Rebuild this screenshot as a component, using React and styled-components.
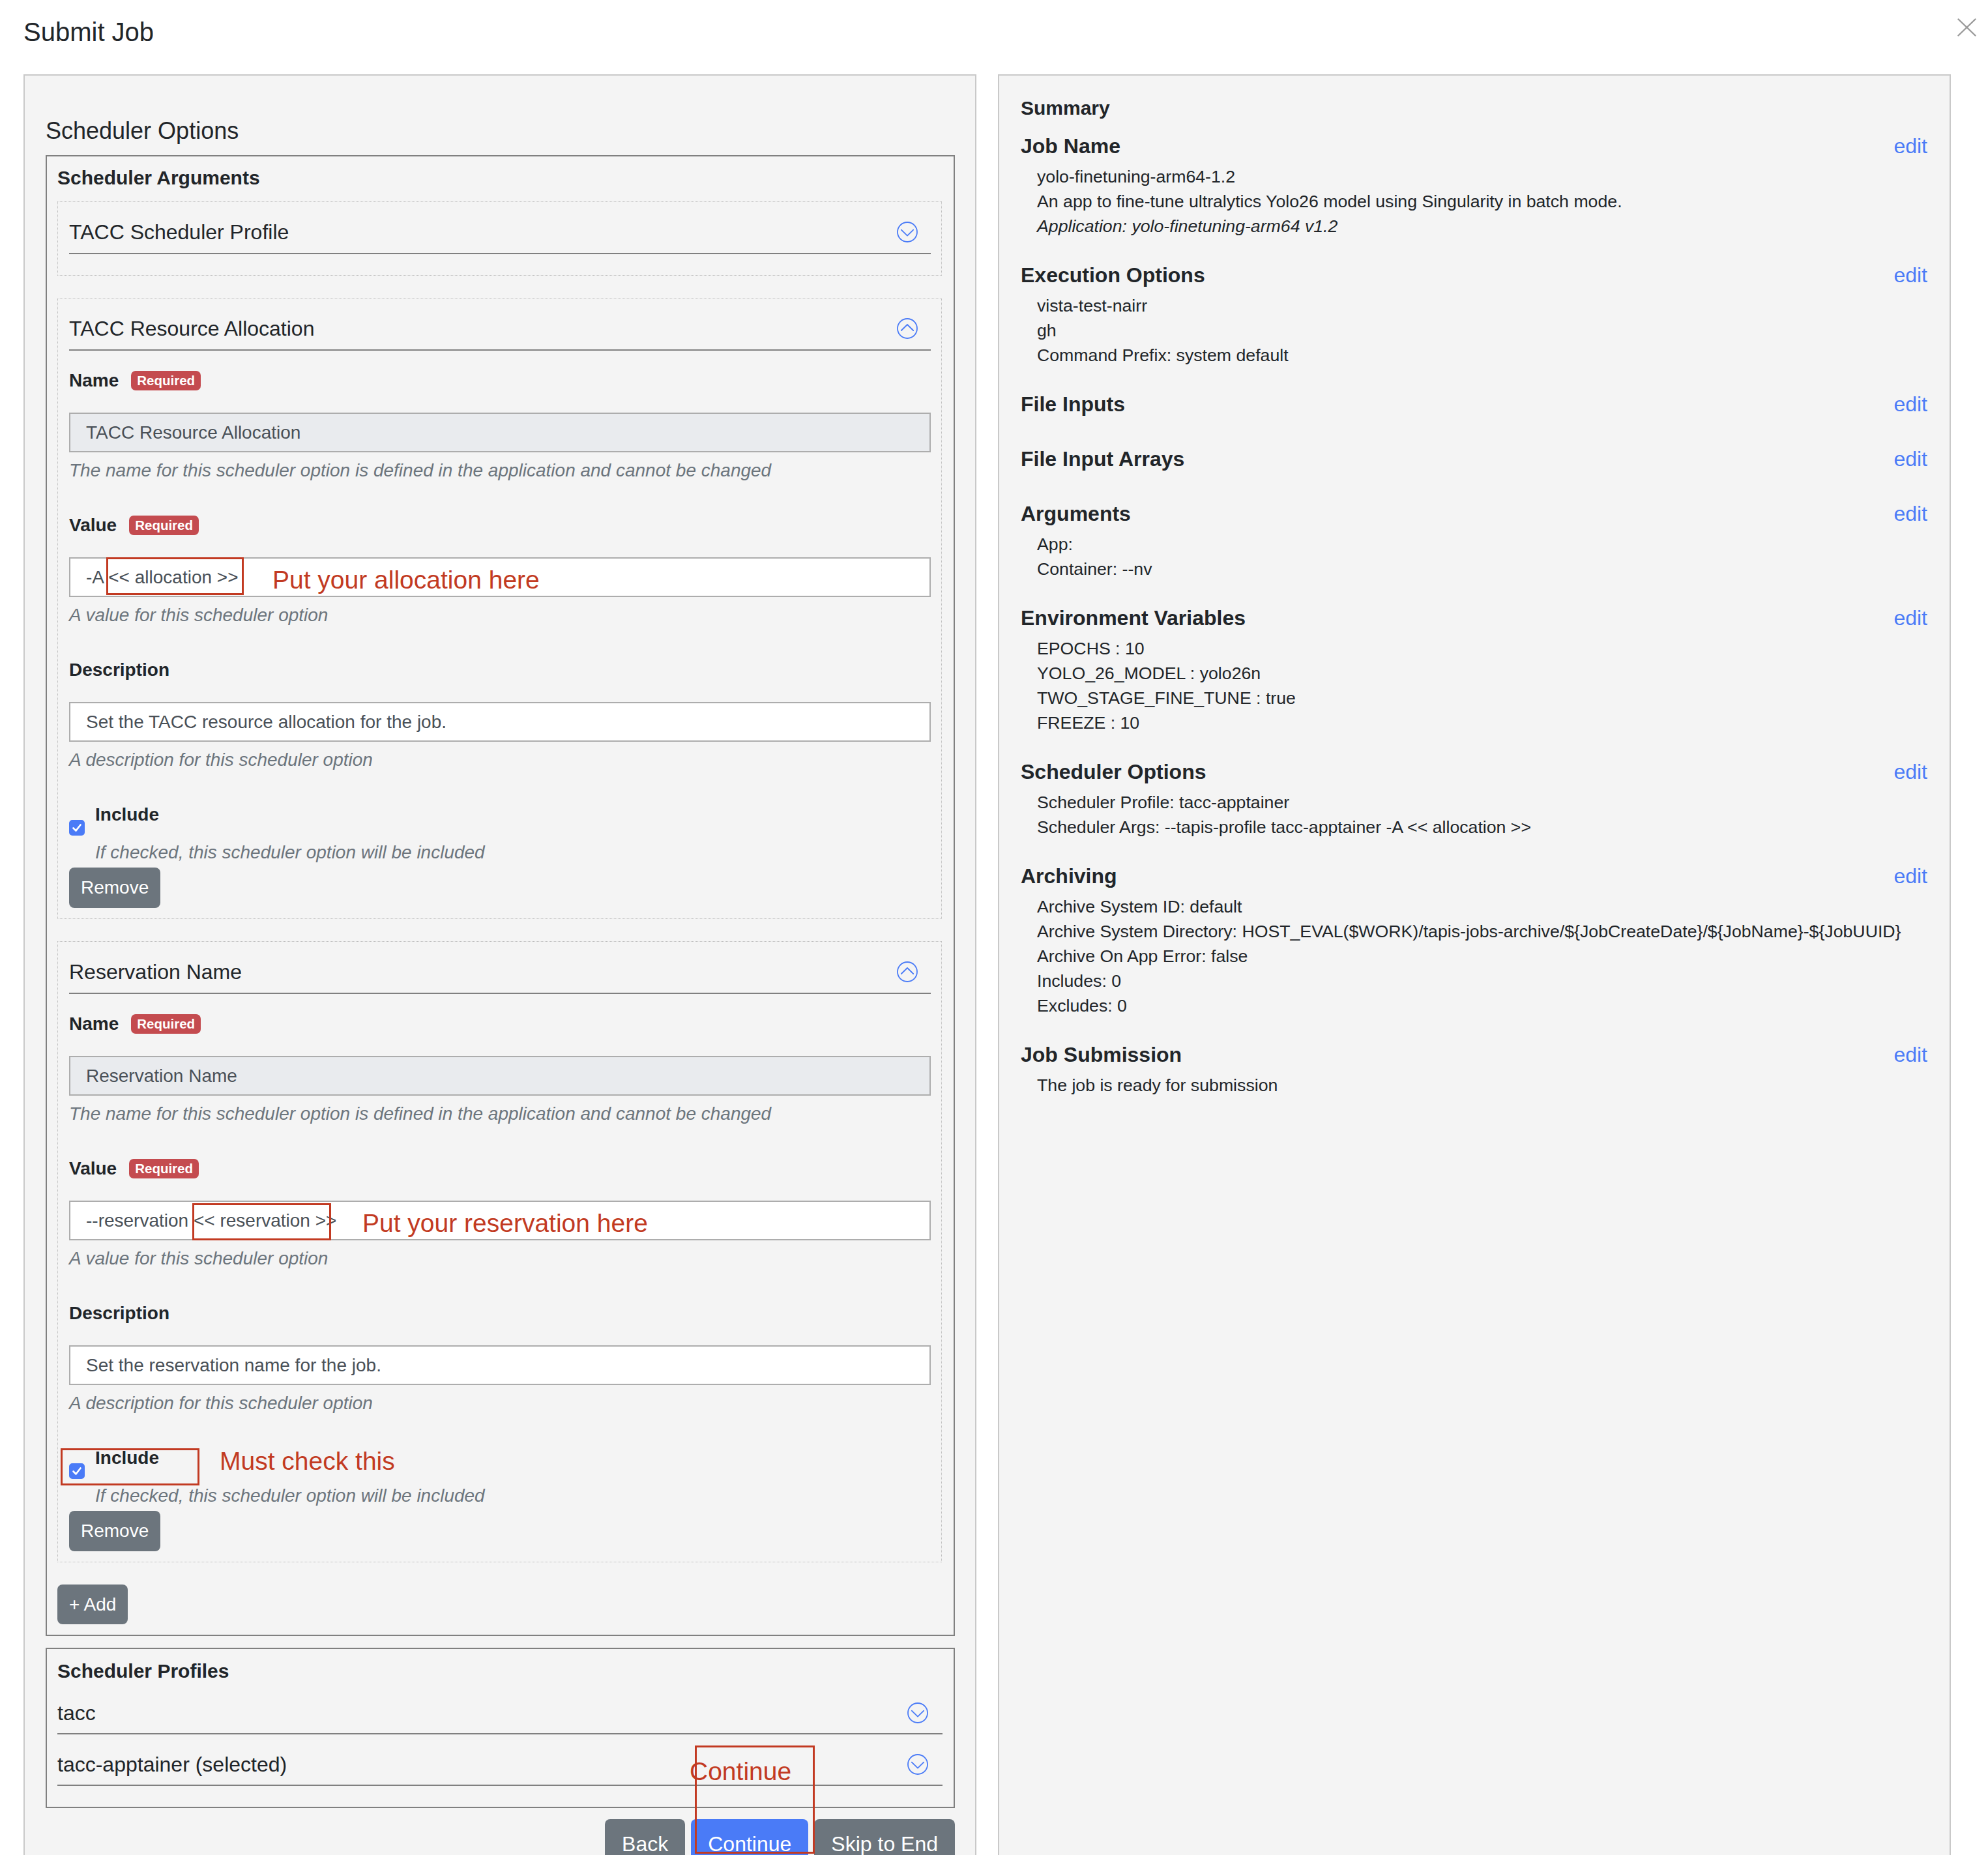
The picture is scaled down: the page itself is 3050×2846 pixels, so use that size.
import styled, { createGlobalStyle } from "styled-components";

const GlobalStyle = createGlobalStyle`
  html, body {
    margin: 0;
    padding: 0;
    background: #fff;
    overflow: hidden;
  }
  body {
    font-family: "Liberation Sans", Arial, Helvetica, sans-serif;
    color: #212529;
  }
  * {
    box-sizing: border-box;
  }
`;

const Page = styled.div`
  width: 3050px;
  padding: 25px 18px 0 36px;
`;

const Header = styled.div`
  display: flex;
  justify-content: space-between;
  align-items: flex-start;
  margin-bottom: 41px;
`;

const Title = styled.h1`
  margin: 0;
  font-size: 40px;
  line-height: 48px;
  font-weight: 400;
`;

const CloseButton = styled.button`
  border: 0;
  background: none;
  padding: 0;
  margin-top: 3px;
  width: 29px;
  height: 28px;
  display: flex;
  cursor: pointer;
`;

const Columns = styled.div`
  display: grid;
  grid-template-columns: 1462px 1462px;
  column-gap: 33px;
  align-items: stretch;
`;

const Panel = styled.section`
  background: #f4f4f4;
  border: 2px solid #c9c9c9;
  padding: ${(p) => p.$pad};
`;

/* ---------- left: scheduler options ---------- */

const SectionTitle = styled.h2`
  margin: 0 0 16px;
  font-size: 36px;
  line-height: 43px;
  font-weight: 400;
`;

const Group = styled.div`
  border: 2px solid #808080;
  padding: ${(p) => p.$pt}px 17px 16px 16px;
  margin-top: ${(p) => p.$mt || 0}px;
`;

const GroupTitle = styled.div`
  font-size: 30px;
  line-height: 36px;
  font-weight: 700;
  margin-bottom: 18px;
`;

const Item = styled.div`
  border: 1px dotted #bdbdbd;
  padding: 26px 16px 16px 17px;
  margin: 0 1px 34px 0;
`;

const ItemHeader = styled.div`
  display: flex;
  justify-content: space-between;
  align-items: center;
  padding: 0 20px 12px 0;
  border-bottom: 2px solid #808080;
  margin-bottom: 16px;
`;

const ItemTitle = styled.div`
  font-size: 32px;
  line-height: 40px;
`;

const ItemBody = styled.div`
  padding-top: 9px;
`;

const Field = styled.div`
  & + & {
    margin-top: 42px;
  }
`;

const LabelRow = styled.div`
  display: flex;
  align-items: center;
  gap: 19px;
  height: 42px;
  margin-bottom: 28px;
`;

const Label = styled.div`
  font-size: 28px;
  line-height: 42px;
  font-weight: 700;
`;

const Badge = styled.span`
  display: inline-block;
  background: #c44b4f;
  color: #fff;
  font-size: 20.5px;
  font-weight: 700;
  line-height: 30px;
  padding: 0 9px;
  border-radius: 7px;
`;

const InputWrap = styled.div`
  position: relative;
`;

const TextInput = styled.input`
  display: block;
  width: 100%;
  height: 61px;
  padding: 0 24px;
  border: 2px solid #adadad;
  border-radius: 0;
  background: ${(p) => (p.$locked ? "#e9ebee" : "#fff")};
  color: #495057;
  font-family: "Liberation Sans", Arial, sans-serif;
  font-size: 28px;
  outline: none;
`;

const Help = styled.div`
  margin-top: ${(p) => p.$mt ?? 7}px;
  font-size: 28px;
  line-height: 42px;
  font-style: italic;
  color: #6c757d;
`;

const CheckRow = styled.div`
  position: relative;
  display: flex;
  align-items: flex-start;
  gap: 16px;
  margin-top: 42px;
`;

const CheckBox = styled.span`
  flex: none;
  width: 24px;
  height: 24px;
  margin-top: 29px;
  border-radius: 5px;
  background: #4a7bf7;
  display: flex;
  align-items: center;
  justify-content: center;
`;

const CheckText = styled.div`
  display: flex;
  flex-direction: column;
`;

const SmallButton = styled.button`
  display: block;
  margin-top: ${(p) => p.$mt || 0}px;
  background: #6c757d;
  border: 0;
  border-radius: 8px;
  color: #fff;
  font-family: "Liberation Sans", Arial, sans-serif;
  font-size: 28px;
  line-height: 42px;
  padding: ${(p) => (p.$tall ? "10px" : "9.5px")} 18px;
  cursor: pointer;
`;

const ProfileRow = styled.div`
  display: flex;
  justify-content: space-between;
  align-items: center;
  margin-top: 26px;
  padding: 0 22px 11px 0;
  border-bottom: 2px solid #808080;
  font-size: 32px;
  line-height: 40px;

  &:last-child {
    margin-bottom: 16px;
  }
`;

const ButtonRow = styled.div`
  position: relative;
  display: flex;
  justify-content: flex-end;
  gap: 9px;
  margin-top: 17px;
`;

const Button = styled.button`
  background: ${(p) => (p.$primary ? "#4a7bf7" : "#6c757d")};
  border: 2px solid ${(p) => (p.$primary ? "#4a7bf7" : "#6c757d")};
  border-radius: 8px;
  color: #fff;
  font-family: "Liberation Sans", Arial, sans-serif;
  font-size: 32px;
  line-height: 48px;
  padding: 12px 24px;
  cursor: pointer;
`;

/* red annotations drawn over the screenshot */
const NoteBox = styled.div`
  position: absolute;
  left: ${(p) => p.$x}px;
  top: ${(p) => p.$y}px;
  width: ${(p) => p.$w}px;
  height: ${(p) => p.$h}px;
  border: 3px solid #c23a22;
  pointer-events: none;
`;

const NoteText = styled.div`
  position: absolute;
  left: ${(p) => p.$x}px;
  top: ${(p) => p.$y}px;
  font-size: 39px;
  line-height: 48px;
  color: #c23a22;
  white-space: nowrap;
  pointer-events: none;
`;

/* ---------- right: summary ---------- */

const SummaryTitle = styled.div`
  font-size: 30px;
  line-height: 38px;
  font-weight: 700;
  margin-bottom: 20px;
`;

const SummarySection = styled.div`
  margin-bottom: 37px;
`;

const SummaryHead = styled.div`
  display: flex;
  justify-content: space-between;
  align-items: center;
  padding-bottom: 9px;
`;

const SummaryHeading = styled.div`
  font-size: 32px;
  line-height: 38px;
  font-weight: 700;
`;

const EditLink = styled.a`
  font-size: 32px;
  line-height: 38px;
  color: #4a7bf7;
  text-decoration: none;
  cursor: pointer;
`;

const SummaryLine = styled.div`
  padding-left: 25px;
  font-size: 26.7px;
  line-height: 38px;
  font-style: ${(p) => (p.$italic ? "italic" : "normal")};
  white-space: nowrap;
`;

/* ---------- icons ---------- */

const ChevronCircle = ({ up }) => (
  <svg
    width="32"
    height="32"
    viewBox="0 0 32 32"
    fill="none"
    stroke="#4a7bf7"
    strokeWidth="1.8"
    strokeLinecap="round"
    strokeLinejoin="round"
  >
    <circle cx="16" cy="16" r="15" />
    <path d={up ? "M6.8 19 L16 10 L25.2 19" : "M6.8 12.6 L16 21.6 L25.2 12.6"} />
  </svg>
);

const CloseIcon = () => (
  <svg width="29" height="28" viewBox="0 0 29 28" stroke="#9a9a9a" strokeWidth="2.4" strokeLinecap="round">
    <line x1="1.5" y1="1.5" x2="27.5" y2="26.5" />
    <line x1="27.5" y1="1.5" x2="1.5" y2="26.5" />
  </svg>
);

const CheckMark = () => (
  <svg width="24" height="24" viewBox="0 0 24 24" fill="none" stroke="#fff" strokeWidth="2.6" strokeLinecap="round" strokeLinejoin="round">
    <path d="M6.5 12.5 L10.5 16.5 L17.5 7.5" />
  </svg>
);

/* ---------- data ---------- */

const summary = [
  {
    title: "Job Name",
    lines: [
      "yolo-finetuning-arm64-1.2",
      "An app to fine-tune ultralytics Yolo26 model using Singularity in batch mode.",
      { italic: true, text: "Application: yolo-finetuning-arm64 v1.2" },
    ],
  },
  { title: "Execution Options", lines: ["vista-test-nairr", "gh", "Command Prefix: system default"] },
  { title: "File Inputs", lines: [] },
  { title: "File Input Arrays", lines: [] },
  { title: "Arguments", lines: ["App:", "Container: --nv"] },
  {
    title: "Environment Variables",
    lines: ["EPOCHS : 10", "YOLO_26_MODEL : yolo26n", "TWO_STAGE_FINE_TUNE : true", "FREEZE : 10"],
  },
  {
    title: "Scheduler Options",
    lines: [
      "Scheduler Profile: tacc-apptainer",
      "Scheduler Args: --tapis-profile tacc-apptainer -A << allocation >>",
    ],
  },
  {
    title: "Archiving",
    lines: [
      "Archive System ID: default",
      "Archive System Directory: HOST_EVAL($WORK)/tapis-jobs-archive/${JobCreateDate}/${JobName}-${JobUUID}",
      "Archive On App Error: false",
      "Includes: 0",
      "Excludes: 0",
    ],
  },
  { title: "Job Submission", lines: ["The job is ready for submission"] },
];

const SchedulerItem = ({ title, value, description, valueNote, includeNote }) => (
  <Item>
    <ItemHeader>
      <ItemTitle>{title}</ItemTitle>
      <ChevronCircle up />
    </ItemHeader>
    <ItemBody>
      <Field>
        <LabelRow>
          <Label>Name</Label>
          <Badge>Required</Badge>
        </LabelRow>
        <TextInput readOnly $locked value={title} />
        <Help>The name for this scheduler option is defined in the application and cannot be changed</Help>
      </Field>
      <Field>
        <LabelRow>
          <Label>Value</Label>
          <Badge>Required</Badge>
        </LabelRow>
        <InputWrap>
          <TextInput readOnly value={value} />
          {valueNote}
        </InputWrap>
        <Help>A value for this scheduler option</Help>
      </Field>
      <Field>
        <LabelRow>
          <Label>Description</Label>
        </LabelRow>
        <TextInput readOnly value={description} />
        <Help>A description for this scheduler option</Help>
      </Field>
      <CheckRow>
        <CheckBox>
          <CheckMark />
        </CheckBox>
        <CheckText>
          <Label>Include</Label>
          <Help $mt={16}>If checked, this scheduler option will be included</Help>
        </CheckText>
        {includeNote}
      </CheckRow>
      <SmallButton $mt={2} $tall>
        Remove
      </SmallButton>
    </ItemBody>
  </Item>
);

export default function App() {
  return (
    <Page>
      <GlobalStyle />
      <Header>
        <Title>Submit Job</Title>
        <CloseButton aria-label="close">
          <CloseIcon />
        </CloseButton>
      </Header>

      <Columns>
        <Panel $pad="63px 31px 60px 32px">
          <SectionTitle>Scheduler Options</SectionTitle>

          <Group $pt={15}>
            <GroupTitle>Scheduler Arguments</GroupTitle>

            <Item>
              <ItemHeader>
                <ItemTitle>TACC Scheduler Profile</ItemTitle>
                <ChevronCircle />
              </ItemHeader>
            </Item>

            <SchedulerItem
              title="TACC Resource Allocation"
              value="-A << allocation >>"
              description="Set the TACC resource allocation for the job."
              valueNote={
                <>
                  <NoteBox $x={57} $y={0} $w={211} $h={58} />
                  <NoteText $x={312} $y={11}>Put your allocation here</NoteText>
                </>
              }
            />

            <SchedulerItem
              title="Reservation Name"
              value="--reservation << reservation >>"
              description="Set the reservation name for the job."
              valueNote={
                <>
                  <NoteBox $x={189} $y={4} $w={213} $h={57} />
                  <NoteText $x={450} $y={11}>Put your reservation here</NoteText>
                </>
              }
              includeNote={
                <>
                  <NoteBox $x={-13} $y={6} $w={213} $h={57} />
                  <NoteText $x={231} $y={2}>Must check this</NoteText>
                </>
              }
            />

            <SmallButton>+ Add</SmallButton>
          </Group>

          <Group $pt={16} $mt={18}>
            <GroupTitle>Scheduler Profiles</GroupTitle>
            <div>
              <ProfileRow>
                <span>tacc</span>
                <ChevronCircle />
              </ProfileRow>
              <ProfileRow>
                <span>tacc-apptainer (selected)</span>
                <ChevronCircle />
              </ProfileRow>
            </div>
          </Group>

          <ButtonRow>
            <Button>Back</Button>
            <Button $primary>Continue</Button>
            <Button>Skip to End</Button>
            <NoteBox $x={996} $y={-113} $w={184} $h={166} />
            <NoteText $x={988} $y={-97}>Continue</NoteText>
          </ButtonRow>
        </Panel>

        <Panel $pad="31px 34px 0 33px">
          <SummaryTitle>Summary</SummaryTitle>
          {summary.map((s) => (
            <SummarySection key={s.title}>
              <SummaryHead>
                <SummaryHeading>{s.title}</SummaryHeading>
                <EditLink>edit</EditLink>
              </SummaryHead>
              {s.lines.map((l, i) =>
                typeof l === "string" ? (
                  <SummaryLine key={i}>{l}</SummaryLine>
                ) : (
                  <SummaryLine key={i} $italic>
                    {l.text}
                  </SummaryLine>
                )
              )}
            </SummarySection>
          ))}
        </Panel>
      </Columns>
    </Page>
  );
}
